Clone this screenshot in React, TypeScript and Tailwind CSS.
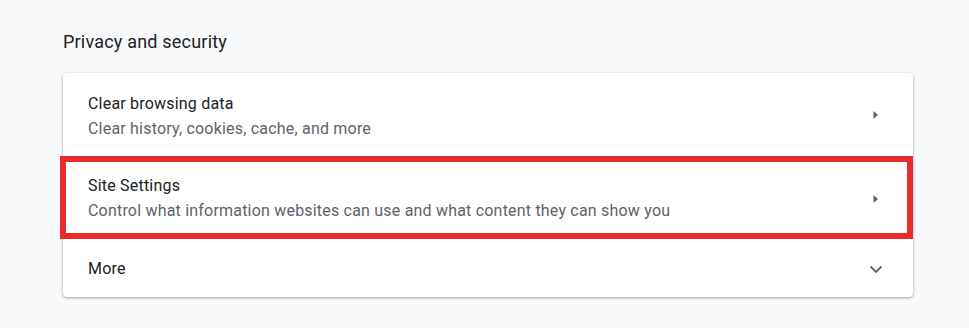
import React from "react";

function Arrow() {
  return (
    <svg width="20" height="20" viewBox="0 0 20 20" className="block">
      <path d="M7.5 6 L12 10 L7.5 14 Z" fill="#5f6368" />
    </svg>
  );
}

function Chevron() {
  return (
    <svg width="20" height="20" viewBox="0 0 20 20" className="block">
      <path d="M4.5 7.5 L10 13 L15.5 7.5" fill="none" stroke="#5f6368" strokeWidth="1.8" />
    </svg>
  );
}

export default function App() {
  return (
    <div
      className="w-[969px] h-[328px] bg-[#f8f9fa] pl-[63px] pr-[56px] pt-[29px]"
      style={{ fontFamily: "Roboto, 'Noto Sans', sans-serif" }}
    >
      <h2 className="text-[18px] leading-[26px] tracking-[0.2px] text-[#202124] font-normal">Privacy and security</h2>
      <div className="relative mt-[18px] bg-white rounded-[4px] shadow-[0_1px_2px_rgba(60,64,67,0.3),0_1px_3px_1px_rgba(60,64,67,0.15)]">
        <div className="flex items-center h-[84px] pl-[25px] pr-[27px]">
          <div className="flex-1 flex flex-col gap-[5px] pt-[3px]">
            <div className="text-[16px] leading-[20px] tracking-[0.2px] text-[#202124]">Clear browsing data</div>
            <div className="text-[16px] leading-[20px] tracking-[0.2px] text-[#5f6368]">Clear history, cookies, cache, and more</div>
          </div>
          <Arrow />
        </div>
        <div className="flex items-center h-[83px] pl-[25px] pr-[27px]">
          <div className="flex-1 flex flex-col gap-[5px]">
            <div className="text-[16px] leading-[20px] tracking-[0.2px] text-[#202124]">Site Settings</div>
            <div className="text-[16px] leading-[20px] tracking-[0.2px] text-[#5f6368]">
              Control what information websites can use and what content they can show you
            </div>
          </div>
          <Arrow />
        </div>
        <div className="flex items-center h-[57px] pl-[25px] pr-[27px]">
          <div className="flex-1 text-[16px] leading-[20px] tracking-[0.2px] text-[#202124]">More</div>
          <Chevron />
        </div>
        <div className="absolute left-[-3px] top-[83px] w-[853px] h-[83px] border-[6px] border-[#e82c2a] pointer-events-none" />
      </div>
    </div>
  );
}
